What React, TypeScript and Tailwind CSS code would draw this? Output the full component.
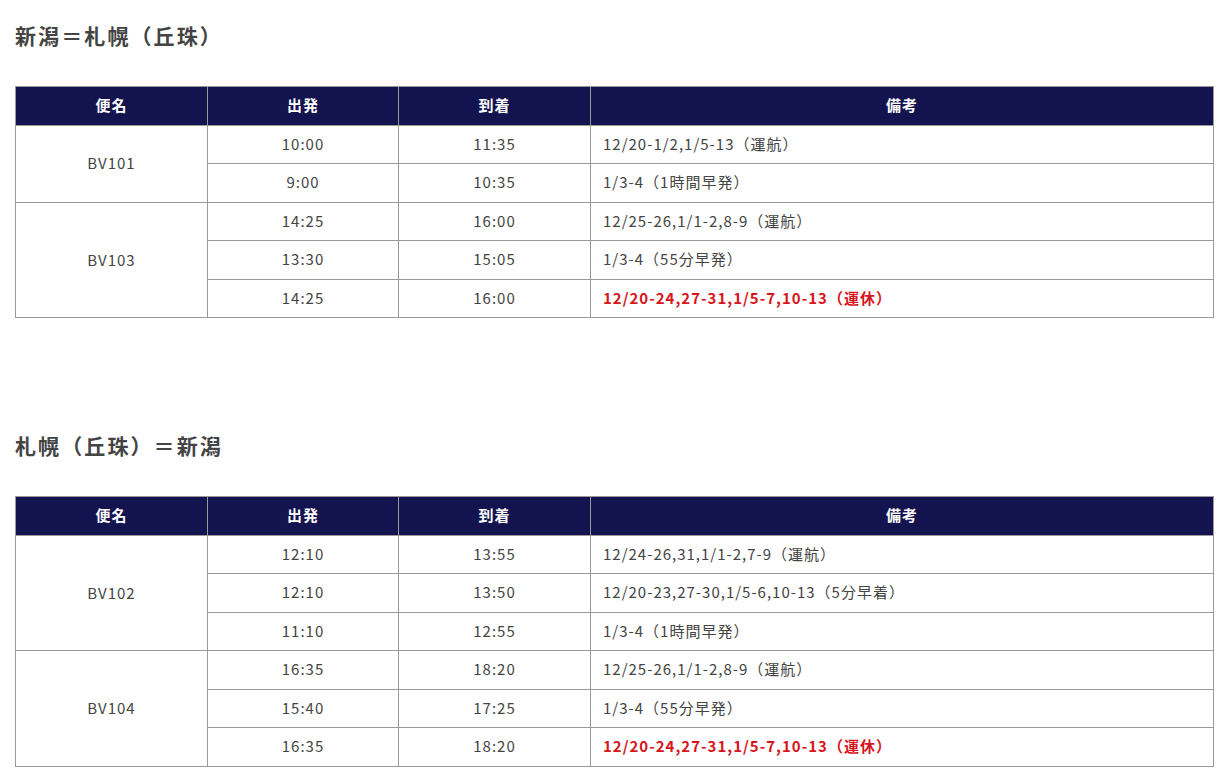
import React from 'react';

type Row = { dep: string; arr: string; note: string; red?: boolean };
type Flight = { name: string; rows: Row[] };

const outbound: Flight[] = [
  {
    name: 'BV101',
    rows: [
      { dep: '10:00', arr: '11:35', note: '12/20-1/2,1/5-13（運航）' },
      { dep: '9:00', arr: '10:35', note: '1/3-4（1時間早発）' },
    ],
  },
  {
    name: 'BV103',
    rows: [
      { dep: '14:25', arr: '16:00', note: '12/25-26,1/1-2,8-9（運航）' },
      { dep: '13:30', arr: '15:05', note: '1/3-4（55分早発）' },
      { dep: '14:25', arr: '16:00', note: '12/20-24,27-31,1/5-7,10-13（運休）', red: true },
    ],
  },
];

const inbound: Flight[] = [
  {
    name: 'BV102',
    rows: [
      { dep: '12:10', arr: '13:55', note: '12/24-26,31,1/1-2,7-9（運航）' },
      { dep: '12:10', arr: '13:50', note: '12/20-23,27-30,1/5-6,10-13（5分早着）' },
      { dep: '11:10', arr: '12:55', note: '1/3-4（1時間早発）' },
    ],
  },
  {
    name: 'BV104',
    rows: [
      { dep: '16:35', arr: '18:20', note: '12/25-26,1/1-2,8-9（運航）' },
      { dep: '15:40', arr: '17:25', note: '1/3-4（55分早発）' },
      { dep: '16:35', arr: '18:20', note: '12/20-24,27-31,1/5-7,10-13（運休）', red: true },
    ],
  },
];

function Timetable({ title, flights }: { title: string; flights: Flight[] }) {
  return (
    <section>
      <h2 className="text-[21px] leading-8 font-bold text-[#444] tracking-[0.1em] mb-[35px]">{title}</h2>
      <table className="w-full border-collapse text-[15px] tracking-[1px] text-[#444] table-fixed">
        <colgroup>
          <col className="w-[192px]" />
          <col className="w-[191px]" />
          <col className="w-[192px]" />
          <col />
        </colgroup>
        <thead>
          <tr className="h-[38.5px] bg-[#13144f] text-white">
            <th className="border border-[#999] font-bold pb-px">便名</th>
            <th className="border border-[#999] font-bold pb-px">出発</th>
            <th className="border border-[#999] font-bold pb-px">到着</th>
            <th className="border border-[#999] font-bold pb-px">備考</th>
          </tr>
        </thead>
        <tbody>
          {flights.map((f) =>
            f.rows.map((r, i) => (
              <tr key={f.name + i} className="h-[38.5px]">
                {i === 0 && (
                  <td rowSpan={f.rows.length} className="border border-[#999] text-center">
                    {f.name}
                  </td>
                )}
                <td className="border border-[#999] text-center pb-px">{r.dep}</td>
                <td className="border border-[#999] text-center pb-px">{r.arr}</td>
                <td
                  className={
                    r.red
                      ? 'border border-[#999] px-3 pb-px font-bold text-[#d8141c]'
                      : 'border border-[#999] px-3 pb-px'
                  }
                >
                  {r.note}
                </td>
              </tr>
            ))
          )}
        </tbody>
      </table>
    </section>
  );
}

export default function App() {
  return (
    <div
      className="bg-white min-h-screen px-[15px] pt-[19px] w-[1231px]"
      style={{ fontFamily: '"Noto Sans CJK JP", "Noto Sans", sans-serif' }}
    >
      <div className="w-[1199px] flex flex-col gap-[111px]">
        <Timetable title="新潟＝札幌（丘珠）" flights={outbound} />
        <Timetable title="札幌（丘珠）＝新潟" flights={inbound} />
      </div>
    </div>
  );
}
